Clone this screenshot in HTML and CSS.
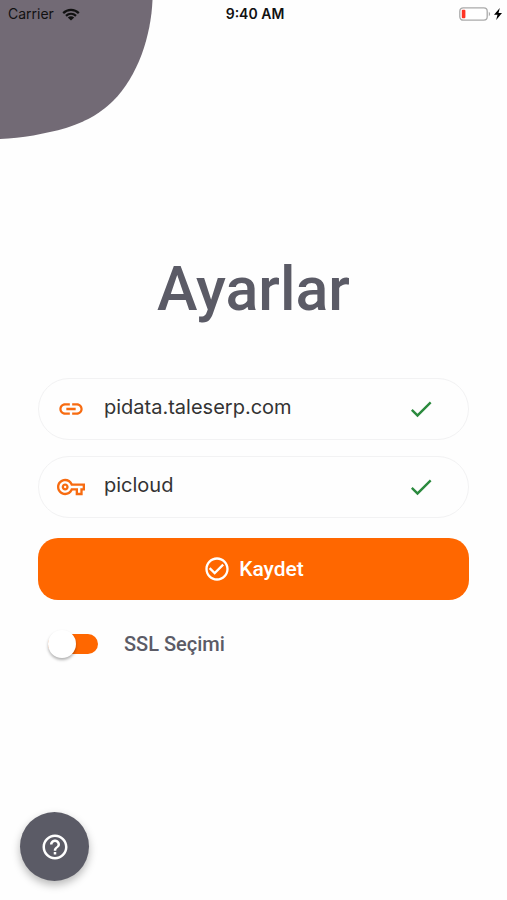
FILE: index.html
```html
<!DOCTYPE html>
<html lang="tr">
<head>
<meta charset="utf-8">
<meta name="viewport" content="width=device-width, initial-scale=1">
<title>Ayarlar</title>
<link rel="stylesheet" href="styles.css">
</head>
<body>
<svg class="blob" viewBox="0 0 153 140" aria-hidden="true"><path d="M0 0H152.500C151 36 138 76 113 101C97 116 86 121 66 128C45 134 22 138 0 139Z"/></svg>
<header class="status">
  <div class="status-carrier">
    <span>Carrier</span>
    <svg class="wifi" viewBox="0 0 18 13" aria-hidden="true">
      <path d="M1.2 5.1C5.6.8 12.4.8 16.8 5.1M4 7.9C6.9 5.2 11.1 5.2 14 7.9" fill="none" stroke="currentColor" stroke-width="2.2"/>
      <path d="M5.8 9.4C7.7 7.8 10.3 7.8 12.2 9.4L9 12.6Z" fill="currentColor"/>
    </svg>
  </div>
  <time class="status-time">9:40 AM</time>
  <div class="status-power">
    <svg class="battery" viewBox="0 0 32 14" aria-hidden="true">
      <rect x=".8" y=".8" width="27.4" height="12.4" rx="3.4" fill="#fff" stroke="#aaa" stroke-width="1.3"/>
      <rect x="2.8" y="2.8" width="3.6" height="8.4" rx="1" fill="#ff3425"/>
      <path d="M29.8 4.8C31.6 5.5 31.6 8.5 29.8 9.2Z" fill="#aaa"/>
    </svg>
    <svg class="bolt" viewBox="0 0 8 12" aria-hidden="true"><path d="M5.8 0L0 6.8H3.5L2.2 12L8 5H4.5Z" fill="#000"/></svg>
  </div>
</header>
<main class="settings">
  <h1 class="title">Ayarlar</h1>
  <form class="form">
    <div class="field">
      <svg class="icon accent" viewBox="0 0 24 24" aria-hidden="true"><path d="M3.9 12c0-1.71 1.39-3.1 3.1-3.1h4V7H7c-2.76 0-5 2.24-5 5s2.240 5 5 5h4v-1.900H7c-1.710 0-3.100-1.390-3.100-3.100zM8 13h8v-2H8v2zm9-6h-4v1.900h4c1.710 0 3.100 1.390 3.100 3.100s-1.390 3.100-3.100 3.100h-4V17h4c2.760 0 5-2.240 5-5s-2.240-5-5-5z"/></svg>
      <input class="field-input" type="text" value="pidata.taleserp.com" aria-label="Sunucu">
      <svg class="icon valid" viewBox="0 0 24 24" aria-hidden="true"><path d="M9 16.170L4.830 12l-1.420 1.410L9 19 21 7l-1.410-1.410z"/></svg>
    </div>
    <div class="field">
      <svg class="icon accent" viewBox="0 0 24 24" aria-hidden="true"><path d="M22 19h-6v-4h-2.680c-1.140 2.420-3.600 4-6.320 4-3.860 0-7-3.140-7-7s3.140-7 7-7c2.720 0 5.170 1.580 6.320 4H24v6h-2v4zm-4-2h2v-4h2v-2H11.940l-.23-.67C11.010 8.340 9.110 7 7 7c-2.760 0-5 2.240-5 5s2.240 5 5 5c2.110 0 4.010-1.340 4.710-3.330l.23-.67H18v4zM7 15c-1.650 0-3-1.350-3-3s1.350-3 3-3 3 1.350 3 3-1.350 3-3 3zm0-4c-.55 0-1 .45-1 1s.45 1 1 1 1-.45 1-1-.45-1-1-1z"/></svg>
      <input class="field-input" type="text" value="picloud" aria-label="Anahtar">
      <svg class="icon valid" viewBox="0 0 24 24" aria-hidden="true"><path d="M9 16.170L4.830 12l-1.420 1.410L9 19 21 7l-1.410-1.410z"/></svg>
    </div>
    <button class="save" type="button">
      <svg class="icon" viewBox="0 0 24 24" aria-hidden="true"><path d="M16.590 7.580L10 14.170l-3.590-3.580L5 12l5 5 8-8zM12 2C6.480 2 2 6.480 2 12s4.480 10 10 10 10-4.480 10-10S17.520 2 12 2zm0 18c-4.420 0-8-3.580-8-8s3.580-8 8-8 8 3.580 8 8-3.580 8-8 8z"/></svg>
      <span>Kaydet</span>
    </button>
    <label class="ssl"><input class="switch" type="checkbox"><span>SSL Seçimi</span></label>
  </form>
</main>
<button class="help" type="button" aria-label="Yardım">
  <svg class="help-icon" viewBox="0 0 24 24" aria-hidden="true"><path d="M11 18h2v-2h-2v2zm1-16C6.480 2 2 6.480 2 12s4.480 10 10 10 10-4.480 10-10S17.520 2 12 2zm0 18c-4.410 0-8-3.590-8-8s3.590-8 8-8 8 3.590 8 8-3.590 8-8 8zm0-14c-2.210 0-4 1.790-4 4h2c0-1.100.9-2 2-2s2 .9 2 2c0 2-3 1.750-3 5h2c0-2.250 3-2.500 3-5 0-2.210-1.790-4-4-4z"/></svg>
</button>
</body>
</html>
```

FILE: styles.css
```css
* {
  box-sizing: border-box;
}

body {
  margin: 0;
  min-height: 100vh;
  display: flex;
  flex-direction: column;
  background: #fefefe;
  color: #5b5b66;
  font-family: Roboto, sans-serif;
}

.blob {
  position: absolute;
  top: 0;
  left: 0;
  width: 153px;
  height: 140px;
  fill: #726a75;
}

.status {
  position: relative;
  display: grid;
  grid-template-columns: 1fr auto 1fr;
  align-items: center;
  height: 28px;
  padding: 0 5px 0 8px;
  color: #111;
  font: 14px/28px Inter, sans-serif;
}

.status-carrier,
.status-power {
  display: flex;
  align-items: center;
  gap: 8px;
}

.status-power {
  justify-content: flex-end;
  gap: 3px;
}

.status-time {
  font-weight: 600;
}

.wifi {
  width: 18px;
  height: 13px;
}

.battery {
  width: 32px;
  height: 14px;
}

.bolt {
  width: 8px;
  height: 12px;
}

.settings {
  padding: 225px 38px 0;
}

.title {
  margin: 0;
  text-align: center;
  font-size: 61px;
  line-height: 72px;
  font-weight: 500;
}

.form {
  display: flex;
  flex-direction: column;
  gap: 16px;
  padding-top: 53px;
}

.icon {
  flex: none;
  width: 28px;
  height: 28px;
  fill: currentColor;
}

.field {
  display: flex;
  align-items: center;
  gap: 19px;
  height: 62px;
  padding: 0 33px 0 18px;
  border: 1px solid #f2f2f3;
  border-radius: 31px;
}

.field-input {
  flex: 1;
  min-width: 0;
  padding: 0 0 4px;
  border: 0;
  outline: 0;
  background: none;
  color: #333;
  font: 20px/28px Inter, sans-serif;
}

.accent {
  color: #f76b10;
}

.valid {
  color: #2b8a3e;
}

.save {
  display: flex;
  align-items: center;
  justify-content: center;
  gap: 8px;
  height: 62px;
  margin-top: 4px;
  border: 0;
  border-radius: 20px;
  background: #ff6700;
  color: #fff;
  font: 500 21px/28px Roboto, sans-serif;
}

.ssl {
  display: flex;
  align-items: center;
  align-self: flex-start;
  gap: 26px;
  margin: 12px 0 0 10px;
  font-size: 20px;
  line-height: 32px;
  font-weight: 500;
}

.switch {
  appearance: none;
  display: flex;
  align-items: center;
  width: 50px;
  height: 20px;
  margin: 0;
  border-radius: 10px;
  background: #ff6700;
}

.switch::before {
  content: "";
  width: 28px;
  height: 28px;
  border-radius: 50%;
  background: #fff;
  box-shadow: 0 2px 3px rgb(0 0 0 / 30%);
}

.switch:checked {
  justify-content: flex-end;
}

.help {
  display: grid;
  place-items: center;
  width: 69px;
  height: 69px;
  margin: auto 0 19px 20px;
  padding: 0;
  border: 0;
  border-radius: 50%;
  background: #5b5b66;
  color: #fff;
  box-shadow: 0 4px 8px rgb(0 0 0 / 28%);
}

.help-icon {
  width: 30px;
  height: 30px;
  fill: currentColor;
}
```
